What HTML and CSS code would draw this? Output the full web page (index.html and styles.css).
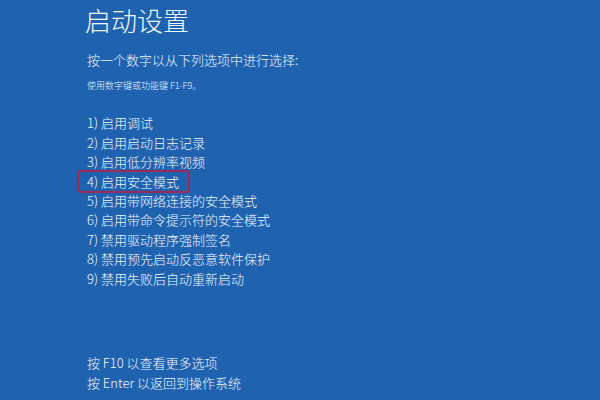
FILE: index.html
```html
<!DOCTYPE html>
<html lang="zh-CN">
<head>
<meta charset="utf-8">
<title>启动设置</title>
<link rel="stylesheet" href="styles.css">
</head>
<body>
<main class="screen">
  <h1 class="title">启动设置</h1>
  <p class="prompt">按一个数字以从下列选项中进行选择:</p>
  <p class="hint">使用数字键或功能键 F1-F9。</p>
  <ol class="options">
    <li>1) 启用调试</li>
    <li>2) 启用启动日志记录</li>
    <li>3) 启用低分辨率视频</li>
    <li><span class="selected">4) 启用安全模式</span></li>
    <li>5) 启用带网络连接的安全模式</li>
    <li>6) 启用带命令提示符的安全模式</li>
    <li>7) 禁用驱动程序强制签名</li>
    <li>8) 禁用预先启动反恶意软件保护</li>
    <li>9) 禁用失败后自动重新启动</li>
  </ol>
  <div class="footer">
    <p>按 F10 以查看更多选项</p>
    <p>按 Enter 以返回到操作系统</p>
  </div>
</main>
</body>
</html>
```
FILE: styles.css
```css
html, body {
  margin: 0;
  padding: 0;
  background: #1f63b0;
}
.screen {
  box-sizing: border-box;
  width: 600px;
  height: 400px;
  padding: 5px 0 8px 87px;
  display: flex;
  flex-direction: column;
  color: #f2f6fb;
  font-family: "Noto Sans CJK SC", "Noto Sans", sans-serif;
  font-weight: 300;
}
.title {
  margin: 0 0 0 -2px;
  font-size: 26px;
  line-height: 30px;
  font-weight: 300;
}
.prompt {
  margin: 15px 0 0;
  font-size: 13px;
  line-height: 20px;
}
.hint {
  margin: 9px 0 0;
  font-size: 9px;
  line-height: 14px;
}
.options {
  list-style: none;
  margin: 20.3px 0 0;
  padding: 0;
  font-size: 13px;
  line-height: 19.4px;
}
.selected {
  display: inline-block;
  margin-left: -8px;
  padding: 0 9px 0 8px;
  border-radius: 2px;
  box-shadow: 0 0 0 2px #9e2a55;
}
.footer {
  margin-top: auto;
  font-size: 13px;
  line-height: 19.4px;
}
.footer p {
  margin: 0;
}
```
